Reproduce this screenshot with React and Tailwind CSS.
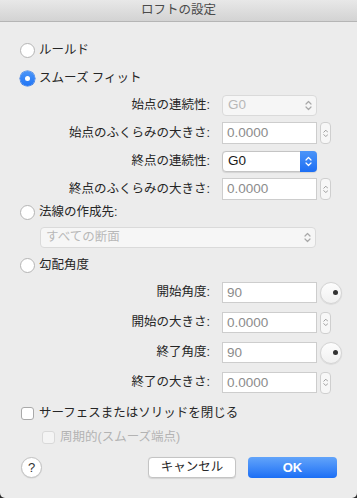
import React from "react";

const font = "font-['Liberation_Sans','Noto_Sans_CJK_JP',sans-serif]";

function Chevrons({ color = "#6b6b6b", size = 1 }) {
  return (
    <svg width={7 * size} height={11 * size} viewBox="0 0 7 11" fill="none">
      <path d="M1 4 L3.5 1.5 L6 4" stroke={color} strokeWidth="1.2" strokeLinecap="round" strokeLinejoin="round" />
      <path d="M1 7 L3.5 9.5 L6 7" stroke={color} strokeWidth="1.2" strokeLinecap="round" strokeLinejoin="round" />
    </svg>
  );
}

function Radio({ checked, label }) {
  return (
    <div className="flex items-center h-5">
      {checked ? (
        <span className="w-[15px] h-[15px] rounded-full bg-gradient-to-b from-[#4c96f8] to-[#1f74f5] flex items-center justify-center shadow-[0_0_0_0.5px_#2a6fe0]">
          <span className="w-[5px] h-[5px] rounded-full bg-white" />
        </span>
      ) : (
        <span className="w-[15px] h-[15px] rounded-full bg-white border border-[#b4b4b4]" />
      )}
      <span className="ml-[4px] text-[12.5px] text-[#262626] leading-none">{label}</span>
    </div>
  );
}

function Stepper() {
  return (
    <div className="ml-[3px] w-[11px] h-[22px] rounded-[4px] border border-[#cfcfcf] bg-[#f7f7f7] flex items-center justify-center">
      <Chevrons color="#9a9a9a" size={0.8} />
    </div>
  );
}

function Dial() {
  return (
    <div className="ml-[3px] w-[22px] h-[22px] rounded-full bg-gradient-to-b from-[#fdfdfd] to-[#f1f1f1] border border-[#d4d4d4] shadow-[0_0.5px_1px_rgba(0,0,0,0.12)] flex items-center justify-end pr-[3px]">
      <span className="w-[5px] h-[5px] rounded-full bg-[#333]" />
    </div>
  );
}

function Input({ value, h = "h-[22px]" }) {
  return (
    <div className={`w-[95px] ${h} bg-white border border-[#cdcdcd] flex items-center pl-[4px] text-[13.5px] text-[#8c8c8c] leading-none`}>
      {value}
    </div>
  );
}

function Row({ label, children, h = "h-[22px]" }) {
  return (
    <div className={`flex items-center ${h}`}>
      <div className="w-[190px] text-right text-[12.5px] text-[#262626] leading-none whitespace-nowrap">{label}</div>
      <div className="ml-[12px] flex items-center">{children}</div>
    </div>
  );
}

function Checkbox({ label, disabled, className = "" }) {
  return (
    <div className={`flex items-center h-5 ${className}`}>
      <span className={`w-[13px] h-[13px] rounded-[3px] border ${disabled ? "border-[#d9d9d9] bg-[#f4f4f4]" : "border-[#a9a9a9] bg-white"}`} />
      <span className={`ml-[5px] text-[12.5px] leading-none ${disabled ? "text-[#b3b3b3]" : "text-[#262626]"}`}>{label}</span>
    </div>
  );
}

export default function App() {
  return (
    <div className={`w-[357px] h-[498px] bg-[#2a2a2a] ${font}`}>
      <div className="w-full h-full bg-[#ececec] rounded-b-[5px] flex flex-col">
        <div className="h-[22px] shrink-0 bg-gradient-to-b from-[#e8e8e8] to-[#d3d3d3] border-b border-[#b5b5b5] flex items-center justify-center text-[12.5px] text-[#4a4a4a] leading-none">
          ロフトの設定
        </div>

        <div className="pl-[20px] flex flex-col">
          <div className="mt-[18px]"><Radio label="ルールド" /></div>
          <div className="mt-[8px]"><Radio checked label="スムーズ フィット" /></div>

          <div className="mt-[6px] flex flex-col gap-[6px]">
            <Row label="始点の連続性:">
              <div className="w-[95px] h-[21px] rounded-[4px] border border-[#dadada] bg-[#f6f6f6] flex items-center justify-between pl-[5px] pr-[4px]">
                <span className="text-[13.5px] text-[#b8b8b8] leading-none">G0</span>
                <Chevrons color="#a8a8a8" />
              </div>
            </Row>
            <Row label="始点のふくらみの大きさ:">
              <Input value="0.0000" />
              <Stepper />
            </Row>
            <Row label="終点の連続性:">
              <div className="w-[95px] h-[21px] rounded-[4px] border border-[#c4c4c4] bg-white flex items-stretch shadow-[0_0.5px_1px_rgba(0,0,0,0.1)]">
                <span className="flex-1 flex items-center pl-[5px] text-[13.5px] text-[#1a1a1a] leading-none">G0</span>
                <span className="w-[17px] -my-px -mr-px rounded-r-[4px] bg-gradient-to-b from-[#4a94f8] to-[#1c6ef4] flex items-center justify-center">
                  <Chevrons color="#ffffff" />
                </span>
              </div>
            </Row>
            <Row label="終点のふくらみの大きさ:">
              <Input value="0.0000" />
              <Stepper />
            </Row>
          </div>

          <div className="mt-[2px]"><Radio label="法線の作成先:" /></div>
          <div className="mt-[5px] ml-[20px] w-[276px] h-[21px] rounded-[4px] border border-[#dadada] bg-[#f6f6f6] flex items-center justify-between pl-[5px] pr-[4px]">
            <span className="text-[12.5px] text-[#b8b8b8] leading-none">すべての断面</span>
            <Chevrons color="#a8a8a8" />
          </div>
          <div className="mt-[7px]"><Radio label="勾配角度" /></div>

          <div className="mt-[7px] flex flex-col gap-[9px]">
            <Row label="開始角度:" h="h-[21px]">
              <Input value="90" h="h-[21px]" />
              <Dial />
            </Row>
            <Row label="開始の大きさ:" h="h-[21px]">
              <Input value="0.0000" h="h-[21px]" />
              <Stepper />
            </Row>
            <Row label="終了角度:" h="h-[21px]">
              <Input value="90" h="h-[21px]" />
              <Dial />
            </Row>
            <Row label="終了の大きさ:" h="h-[21px]">
              <Input value="0.0000" h="h-[21px]" />
              <Stepper />
            </Row>
          </div>

          <Checkbox className="mt-[10px] pl-[1px]" label="サーフェスまたはソリッドを閉じる" />
          <Checkbox className="mt-[4px] pl-[22px]" disabled label="周期的(スムーズ端点)" />

          <div className="mt-[10px] flex items-center h-[21px] pr-[20px]">
            <div className="ml-[1px] w-[21px] h-[21px] rounded-full bg-white border border-[#c2c2c2] shadow-[0_0.5px_1px_rgba(0,0,0,0.1)] flex items-center justify-center text-[13px] text-[#333] leading-none">
              ?
            </div>
            <div className="ml-auto w-[88px] h-[21px] rounded-[4px] bg-white border border-[#c4c4c4] shadow-[0_0.5px_1px_rgba(0,0,0,0.1)] flex items-center justify-center text-[12.5px] text-[#262626] leading-none">
              キャンセル
            </div>
            <div className="ml-[12px] w-[89px] h-[21px] rounded-[4px] bg-gradient-to-b from-[#62a4fa] to-[#1a6ef5] flex items-center justify-center text-[13px] font-bold text-white leading-none">
              OK
            </div>
          </div>
        </div>
      </div>
    </div>
  );
}
